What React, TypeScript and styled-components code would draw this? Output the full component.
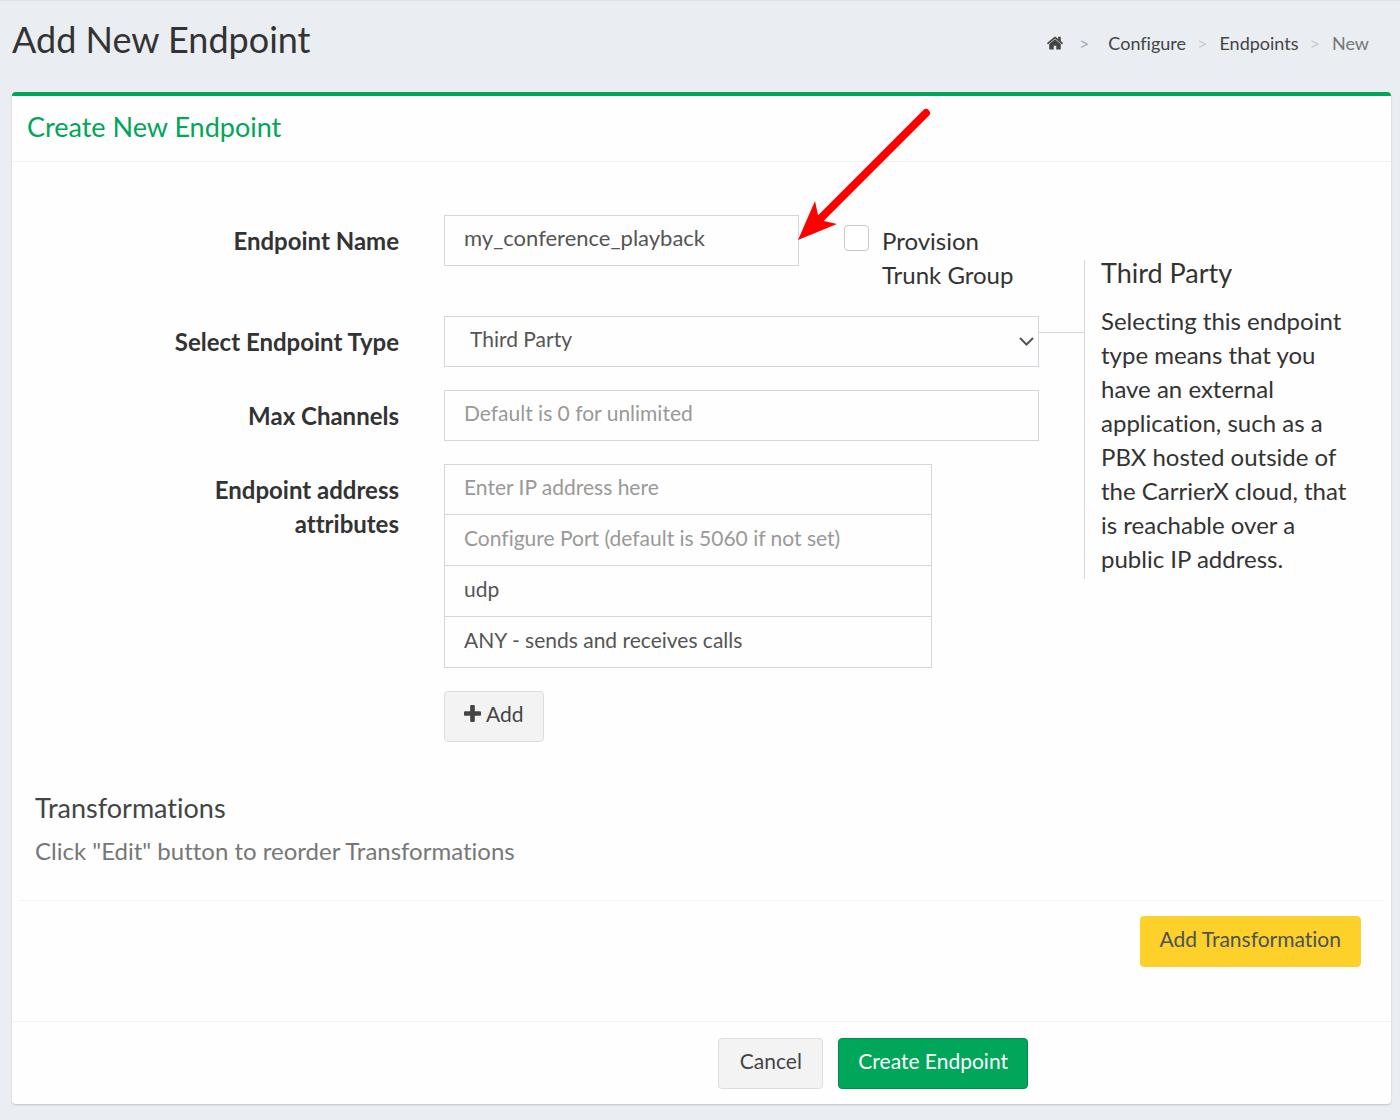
import React from "react";
import styled, { createGlobalStyle, css } from "styled-components";

const GlobalStyle = createGlobalStyle`
  *, *::before, *::after { box-sizing: border-box; }
  body {
    margin: 0;
    background: #eaedf2;
    color: #333;
    font-family: Lato, "Open Sans", sans-serif;
    font-size: 24px;
    line-height: 34px;
    font-variant-ligatures: none;
  }
  h1, h2, h3, p, ol { margin: 0; padding: 0; font-weight: 400; }
  button, input, select { font-family: inherit; font-variant-ligatures: none; }
`;

const Page = styled.div`
  border-top: 1px solid #dfe2e7;
  padding: 0 9px 16px 12px;
`;

const PageHeader = styled.header`
  display: flex;
  justify-content: space-between;
  align-items: center;
  padding: 14px 22px 29px 0;
`;

const PageTitle = styled.h1`
  font-size: 36px;
  line-height: 48px;
`;

const Crumbs = styled.ol`
  display: flex;
  align-items: center;
  list-style: none;
  font-size: 18px;
  line-height: 24px;
  padding-top: 8px;
`;

const Crumb = styled.li<{ $wide?: boolean }>`
  display: flex;
  align-items: center;
  color: #777;

  &:not(:first-child)::before {
    content: ">";
    padding: ${(p) => (p.$wide ? "0 19px 0 16px" : "0 12px 0 11px")};
    color: ${(p) => (p.$wide ? "#a5abb5" : "#ccc")};
  }
`;

const CrumbLink = styled.a`
  display: flex;
  color: #444;
  text-decoration: none;
`;

const Card = styled.main`
  border-top: 4px solid #00a65a;
  border-radius: 4px;
  background: #fefefe;
  box-shadow: 0 1px 2px rgba(0, 0, 0, 0.18);
`;

const CardHeader = styled.div`
  padding: 14px 15px 17px;
  border-bottom: 1px solid #f2f2f2;
`;

const CardTitle = styled.h2`
  font-size: 27px;
  line-height: 34px;
  color: #00a65a;
`;

const Columns = styled.div`
  display: grid;
  grid-template-columns: minmax(0, 1027fr) minmax(0, 322fr);
  padding: 53px 30px 0 0;
`;

const Fields = styled.div`
  display: flex;
  flex-direction: column;
  gap: 23px;
`;

const Row = styled.div`
  display: grid;
  grid-template-columns: minmax(0, 387fr) minmax(0, 595fr);
  column-gap: 45px;
`;

const Label = styled.label`
  padding: 9px 0 8px;
  text-align: right;
  font-weight: 700;
`;

const NameGroup = styled.div`
  display: grid;
  grid-template-columns: minmax(0, 355fr) minmax(0, 195fr);
  align-items: start;
  column-gap: 45px;
`;

const Anchor = styled.div`
  position: relative;
`;

const controlStyle = css`
  display: block;
  width: 100%;
  height: 51px;
  padding: 0 19px 6px;
  border: 1px solid #d2d6de;
  border-radius: 0;
  background: transparent;
  color: #555;
  outline: none;
`;

const TextInput = styled.input`
  ${controlStyle}
  font-size: 22px;
  &::placeholder { color: #999; opacity: 1; font-size: 21px; }
`;

const Select = styled.select<{ $inset?: boolean }>`
  ${controlStyle}
  appearance: none;
  font-size: 21px;
  padding-left: ${(p) => (p.$inset ? 25 : 19)}px;
`;

const Chevron = styled.svg`
  position: absolute;
  right: 5px;
  top: 20px;
  width: 15px;
  height: 11px;
  pointer-events: none;
`;

const Arrow = styled.svg`
  position: absolute;
  left: calc(100% - 1px);
  bottom: 26px;
  width: 136px;
  height: 136px;
  pointer-events: none;
`;

const CheckLabel = styled.label`
  display: flex;
  align-items: flex-start;
  gap: 13px;
`;

const CheckText = styled.span`
  padding: 9px 0 1px;
`;

const Checkbox = styled.input`
  appearance: none;
  flex: none;
  width: 25px;
  height: 26px;
  margin: 10px 0 0;
  border: 1px solid #c8c8c8;
  border-radius: 4px;
  background: #fff;
`;

const Stack = styled.div`
  width: 82%;
  & > * + * { border-top-width: 0; }
`;

const Aside = styled.aside`
  display: flex;
  align-items: flex-start;
  padding-top: 45px;
`;

const Connector = styled.div`
  flex: none;
  width: 45px;
  height: 1px;
  margin-top: 72px;
  background: #d2d6de;
`;

const Info = styled.div`
  flex: 1;
  border-left: 1px solid #d2d6de;
  padding: 0 0 3px 16px;
`;

const InfoTitle = styled.h3`
  font-size: 27px;
  line-height: 26px;
  padding-bottom: 18px;
`;

const Button = styled.button<{ $tone?: "warning" | "success" }>`
  display: inline-flex;
  align-items: center;
  justify-content: center;
  gap: 5px;
  height: 51px;
  padding: 0 19px 6px;
  border: 1px solid #ddd;
  border-radius: 4px;
  background: #f3f3f3;
  color: #444;
  font-size: 21px;
  ${(p) => p.$tone === "warning" && css`
    border-color: #fdd02a; background: #fdd02a; color: #4b5358;
  `}
  ${(p) => p.$tone === "success" && css`
    border-color: #008d4c; background: #00a65a; color: #fff;
  `}
`;

const Section = styled.section`
  padding: 49px 7px 54px;
`;

const SectionHead = styled.div`
  padding: 0 16px 32px;
  border-bottom: 1px solid #f2f2f2;
  color: #444;
`;

const SectionTitle = styled.h3`
  font-size: 27px;
  line-height: 34px;
  padding-bottom: 9px;
`;

const Hint = styled.p`
  color: #777;
`;

const SectionActions = styled.div`
  display: flex;
  justify-content: flex-end;
  padding: 15px 23px 0;
`;

const CardFooter = styled.footer`
  display: grid;
  grid-template-columns: minmax(0, 1016fr) minmax(0, 363fr);
  padding: 16px 0 15px;
  border-top: 1px solid #f2f2f2;
`;

const FooterActions = styled.div`
  display: flex;
  justify-content: flex-end;
  gap: 15px;
  & > button { min-width: 105px; }
`;

const HomeIcon = () => (
  <svg width="16" height="14" viewBox="96 216 1600 1340" fill="#444" aria-label="Home">
    <path d="M1472 992v480q0 26-19 45t-45 19h-384v-384h-256v384h-384q-26 0-45-19t-19-45v-480q0-1 .5-3t.5-3l575-474 575 474q1 2 1 6zm223-69l-62 74q-8 9-21 11h-3q-13 0-21-7l-692-577-692 577q-12 8-24 7-13-2-21-11l-62-74q-8-10-7-23.5t11-21.5l719-599q32-26 76-26t76 26l244 204v-195q0-14 9-23t23-9h192q14 0 23 9t9 23v408l219 182q10 8 11 21.5t-7 23.5z" />
  </svg>
);

const PlusIcon = () => (
  <svg width="17" height="17" viewBox="192 128 1408 1408" fill="#444" aria-hidden="true">
    <path d="M1600 736v192q0 40-28 68t-68 28h-416v416q0 40-28 68t-68 28h-192q-40 0-68-28t-28-68v-416h-416q-40 0-68-28t-28-68v-192q0-40 28-68t68-28h416v-416q0-40 28-68t68-28h192q40 0 68 28t28 68v416h416q40 0 68 28t28 68z" />
  </svg>
);

export default function App() {
  return (
    <>
      <GlobalStyle />
      <Page>
        <PageHeader>
          <PageTitle>Add New Endpoint</PageTitle>
          <nav>
            <Crumbs>
              <Crumb><CrumbLink href="#home"><HomeIcon /></CrumbLink></Crumb>
              <Crumb $wide><CrumbLink href="#configure">Configure</CrumbLink></Crumb>
              <Crumb><CrumbLink href="#endpoints">Endpoints</CrumbLink></Crumb>
              <Crumb>New</Crumb>
            </Crumbs>
          </nav>
        </PageHeader>

        <Card>
          <CardHeader>
            <CardTitle>Create New Endpoint</CardTitle>
          </CardHeader>

          <Columns>
            <Fields>
              <Row>
                <Label htmlFor="name">Endpoint Name</Label>
                <NameGroup>
                  <Anchor>
                    <TextInput id="name" defaultValue="my_conference_playback" />
                    <Arrow viewBox="0 0 136 136">
                      <path d="M128 9 L22 115" stroke="#f00" strokeWidth="8" strokeLinecap="round" />
                      <path d="M0 136 L17 97 L20 111 L26 117 L39 120 Z" fill="#f00" />
                    </Arrow>
                  </Anchor>
                  <CheckLabel>
                    <Checkbox type="checkbox" />
                    <CheckText>Provision Trunk Group</CheckText>
                  </CheckLabel>
                </NameGroup>
              </Row>
              <Row>
                <Label htmlFor="type">Select Endpoint Type</Label>
                <Anchor>
                  <Select id="type" $inset defaultValue="third">
                    <option value="third">Third Party</option>
                  </Select>
                  <Chevron viewBox="0 0 15 11" fill="none" stroke="#555" strokeWidth="2">
                    <path d="M1 2 L7.5 8.5 L14 2" />
                  </Chevron>
                </Anchor>
              </Row>
              <Row>
                <Label htmlFor="channels">Max Channels</Label>
                <TextInput id="channels" placeholder="Default is 0 for unlimited" />
              </Row>
              <Row>
                <Label htmlFor="ip">Endpoint address<br />attributes</Label>
                <Stack>
                  <TextInput id="ip" placeholder="Enter IP address here" />
                  <TextInput aria-label="Port" placeholder="Configure Port (default is 5060 if not set)" />
                  <Select aria-label="Transport" defaultValue="udp">
                    <option value="udp">udp</option>
                  </Select>
                  <Select aria-label="Direction" defaultValue="any">
                    <option value="any">ANY - sends and receives calls</option>
                  </Select>
                </Stack>
              </Row>
              <Row>
                <span />
                <div>
                  <Button type="button"><PlusIcon />Add</Button>
                </div>
              </Row>
            </Fields>

            <Aside>
              <Connector />
              <Info>
                <InfoTitle>Third Party</InfoTitle>
                <p>
                  Selecting this endpoint type means that you have an external
                  application, such as a PBX hosted outside of the CarrierX
                  cloud, that is reachable over a public IP address.
                </p>
              </Info>
            </Aside>
          </Columns>

          <Section>
            <SectionHead>
              <SectionTitle>Transformations</SectionTitle>
              <Hint>Click "Edit" button to reorder Transformations</Hint>
            </SectionHead>
            <SectionActions>
              <Button type="button" $tone="warning">Add Transformation</Button>
            </SectionActions>
          </Section>

          <CardFooter>
            <FooterActions>
              <Button type="button">Cancel</Button>
              <Button type="submit" $tone="success">Create Endpoint</Button>
            </FooterActions>
          </CardFooter>
        </Card>
      </Page>
    </>
  );
}
